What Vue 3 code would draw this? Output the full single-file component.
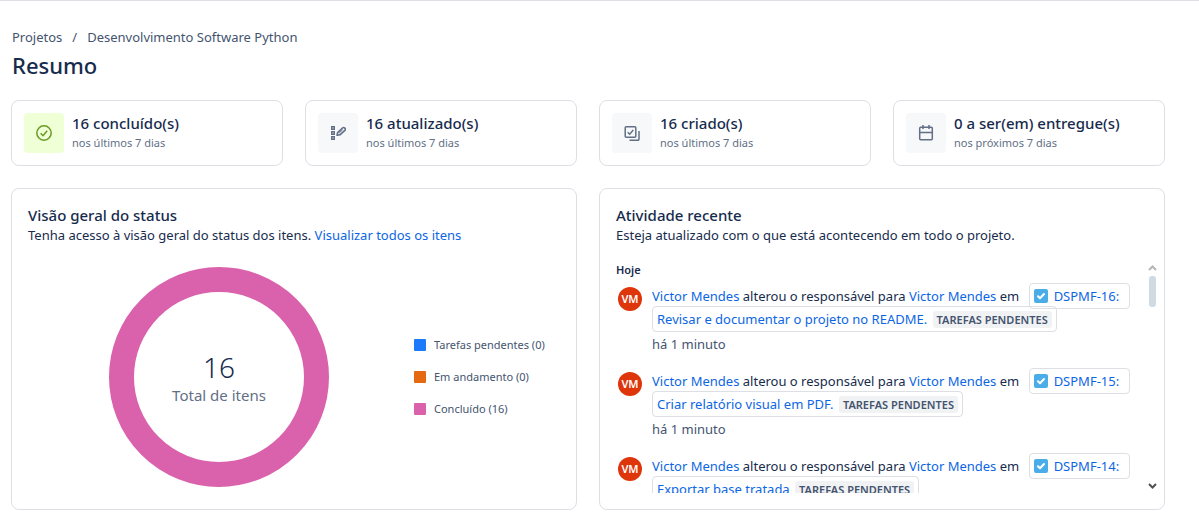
<script setup>
const stats = [
  { icon: 'done', title: '16 concluído(s)', sub: 'nos últimos 7 dias' },
  { icon: 'edit', title: '16 atualizado(s)', sub: 'nos últimos 7 dias' },
  { icon: 'created', title: '16 criado(s)', sub: 'nos últimos 7 dias' },
  { icon: 'due', title: '0 a ser(em) entregue(s)', sub: 'nos próximos 7 dias' },
]
const legend = [
  { key: 'todo', label: 'Tarefas pendentes (0)' },
  { key: 'doing', label: 'Em andamento (0)' },
  { key: 'finished', label: 'Concluído (16)' },
]
const activities = [
  { id: 'DSPMF-16', title: 'Revisar e documentar o projeto no README.' },
  { id: 'DSPMF-15', title: 'Criar relatório visual em PDF.' },
  { id: 'DSPMF-14', title: 'Exportar base tratada' },
]
</script>

<template>
  <main class="page">
    <header>
      <nav class="crumbs" aria-label="Trilha">
        <a href="#">Projetos</a>
        <span>/</span>
        <a href="#">Desenvolvimento Software Python</a>
      </nav>
      <h1>Resumo</h1>
    </header>

    <section class="stats">
      <article v-for="s in stats" :key="s.icon" class="stat">
        <div class="tile" :class="s.icon">
          <svg v-if="s.icon === 'done'" width="16" height="16" viewBox="0 0 16 16" fill="none" stroke="currentColor" stroke-width="1.5">
            <circle cx="8" cy="8" r="7.2" />
            <path d="M4.6 8.3 7 10.7l4.2-5" />
          </svg>
          <svg v-else-if="s.icon === 'edit'" width="16" height="16" viewBox="0 0 16 16">
            <g fill="#8993a5" stroke="currentColor">
              <rect x="1.5" y="1.5" width="3" height="3" />
              <rect x="1.5" y="6.5" width="3" height="3" />
              <rect x="1.5" y="11.5" width="3" height="3" />
            </g>
            <path d="m7 10.3.6-2.700 4.900-4.600a1.700 1.700 0 0 1 2.400 2.400L10.200 9.600z" fill="none" stroke="currentColor" stroke-width="1.600" stroke-linejoin="round" />
            <path d="m9.200 8 3.500-3.300" stroke="currentColor" stroke-width="1" />
          </svg>
          <svg v-else-if="s.icon === 'created'" width="16" height="16" viewBox="0 0 16 16" fill="none" stroke="currentColor" stroke-width="1.5">
            <rect x="1.2" y="1.7" width="10.6" height="10.6" rx="1" />
            <path d="m3.7 7.2 2 2L9.300 5" />
            <path d="M15 6v8a1.200 1.200 0 0 1-1.200 1.200H5.500" />
          </svg>
          <svg v-else width="16" height="16" viewBox="0 0 16 16" fill="none" stroke="currentColor" stroke-width="1.5">
            <rect x="1.7" y="2.2" width="12.6" height="12.6" rx="1" />
            <path d="M2 7.5h12M5 0v4M11 0v4" />
          </svg>
        </div>
        <div>
          <h2 class="stat-title">{{ s.title }}</h2>
          <p class="stat-sub">{{ s.sub }}</p>
        </div>
      </article>
    </section>

    <section class="panels">
      <article class="panel">
        <h2>Visão geral do status</h2>
        <p>Tenha acesso à visão geral do status dos itens. <a href="#">Visualizar todos os itens</a></p>
        <div class="chart">
          <div class="donut-area">
            <div class="donut">
              <strong>16</strong>
              <span>Total de itens</span>
            </div>
          </div>
          <ul class="legend">
            <li v-for="l in legend" :key="l.key"><i :class="l.key"></i>{{ l.label }}</li>
          </ul>
        </div>
      </article>

      <article class="panel">
        <h2>Atividade recente</h2>
        <p>Esteja atualizado com o que está acontecendo em todo o projeto.</p>
        <div class="feed">
          <div class="feed-list">
            <h3>Hoje</h3>
            <div v-for="a in activities" :key="a.id" class="item">
              <span class="avatar">VM</span>
              <div>
                <p class="event"><span class="action"><a href="#">Victor Mendes</a> alterou o responsável para <a href="#">Victor Mendes</a> em</span> <a href="#" class="chip"><svg class="task" width="14" height="14" viewBox="0 0 14 14"><rect width="14" height="14" rx="2" fill="#4bade8" /><path d="m4 7.300 2 2L10 5" fill="none" stroke="#fff" stroke-width="2" stroke-linecap="round" stroke-linejoin="round" /></svg><span class="key">{{ a.id }}:</span><br>{{ a.title }} <span class="badge">TAREFAS PENDENTES</span></a></p>
                <p class="time">há 1 minuto</p>
              </div>
            </div>
          </div>
          <div class="scroll">
            <button type="button" aria-label="Rolar para cima">
              <svg width="9" height="8" viewBox="0 0 9 8"><path d="m1 6 3.500-3.500L8 6" fill="none" stroke="#b5b5b5" stroke-width="2" /></svg>
            </button>
            <div class="thumb"></div>
            <button type="button" class="down" aria-label="Rolar para baixo">
              <svg width="9" height="8" viewBox="0 0 9 8"><path d="M1 2l3.500 3.500L8 2" fill="none" stroke="#505050" stroke-width="2" /></svg>
            </button>
          </div>
        </div>
      </article>
    </section>
  </main>
</template>

<style>
body {
  background: #fff;
}
</style>

<style scoped>
.page {
  border-top: 1px solid #dcdfe4;
  padding: 26px 34px 13px 11px;
  font-family: "Noto Sans", "Open Sans", sans-serif;
  font-size: 13px;
  line-height: 20px;
  color: #172b4d;
}
h1, h2, h3, p, ul {
  margin: 0;
  padding: 0;
}
a {
  color: #0c66e4;
  text-decoration: none;
}
header {
  padding-left: 1px;
}
.crumbs {
  display: flex;
  gap: 10px;
  color: #44546f;
}
.crumbs a {
  color: inherit;
}
h1 {
  margin-top: 4px;
  font-size: 22px;
  line-height: 28px;
  font-weight: 500;
}
.stats {
  display: grid;
  grid-template-columns: repeat(4, 1fr);
  gap: 22px;
  margin-top: 21px;
}
.stat {
  display: flex;
  align-items: center;
  gap: 8px;
  padding: 12px;
  border: 1px solid #dcdfe4;
  border-radius: 8px;
}
.tile {
  display: grid;
  place-items: center;
  width: 40px;
  height: 40px;
  border-radius: 4px;
  background: #f7f8f9;
  color: #626f86;
}
.tile.done {
  background: #efffd6;
  color: #6a9a23;
}
h2 {
  font-size: 15px;
  line-height: 20px;
  font-weight: 500;
}
.stat-sub {
  font-size: 11px;
  line-height: 20px;
  color: #626f86;
}
.panels {
  display: grid;
  grid-template-columns: repeat(2, 1fr);
  gap: 22px;
  margin-top: 22px;
}
.panel {
  padding: 16px;
  border: 1px solid #dcdfe4;
  border-radius: 8px;
}
.chart {
  display: flex;
  align-items: center;
  gap: 4px;
  margin-top: 22px;
}
.donut-area {
  flex: 1;
  display: flex;
  justify-content: center;
}
.donut {
  box-sizing: border-box;
  width: 220px;
  height: 220px;
  border: 25px solid #da62ac;
  border-radius: 50%;
  display: flex;
  flex-direction: column;
  align-items: center;
  justify-content: center;
}
.donut strong {
  font-size: 28px;
  line-height: 36px;
  font-weight: 300;
}
.donut span {
  font-size: 15px;
  line-height: 20px;
  color: #626f86;
}
.legend {
  list-style: none;
  width: 146px;
  display: grid;
  gap: 12px;
  font-size: 11px;
  color: #44546f;
}
.legend li {
  display: flex;
  align-items: center;
  gap: 8px;
}
.legend i {
  width: 12px;
  height: 12px;
  border-radius: 1px;
}
.todo {
  background: #1d7afc;
}
.doing {
  background: #e56910;
}
.finished {
  background: #da62ac;
}
.feed {
  display: flex;
  margin: 14px -9px 0 0;
  height: 234px;
}
.feed-list {
  flex: 1;
  min-width: 0;
  overflow: hidden;
}
h3 {
  font-size: 11px;
  line-height: 22px;
  font-weight: 600;
}
.item {
  display: flex;
  gap: 10px;
  padding: 4px 0 12px 2px;
}
.avatar {
  flex: none;
  width: 24px;
  height: 24px;
  margin-top: 2px;
  border-radius: 50%;
  background: #de350b;
  color: #fff;
  font-size: 11px;
  line-height: 24px;
  font-weight: 600;
  text-align: center;
}
.event {
  line-height: 23px;
  white-space: nowrap;
}
.action {
  margin-right: 6px;
}
.chip {
  padding: 3px 4px;
  border: 1px solid #dcdfe4;
  border-radius: 4px;
  -webkit-box-decoration-break: clone;
  box-decoration-break: clone;
}
.task {
  margin-right: 6px;
  vertical-align: -2px;
}
.key {
  margin-right: 6px;
}
.badge {
  margin-left: 2px;
  padding: 1px 4px;
  border-radius: 3px;
  background: #f1f2f4;
  color: #44546f;
  font-size: 11px;
  font-weight: 600;
}
.time {
  margin-top: 3px;
  color: #44546f;
}
.scroll {
  box-sizing: border-box;
  display: flex;
  flex-direction: column;
  align-items: center;
  width: 9px;
  padding: 5px 0 3px;
  gap: 4px;
}
.scroll button {
  display: block;
  width: 9px;
  height: 8px;
  padding: 0;
  border: 0;
  background: none;
}
.scroll svg {
  display: block;
}
.scroll .down {
  margin-top: auto;
}
.thumb {
  width: 7px;
  height: 31px;
  border-radius: 3px;
  background: #d0dae3;
}
</style>
